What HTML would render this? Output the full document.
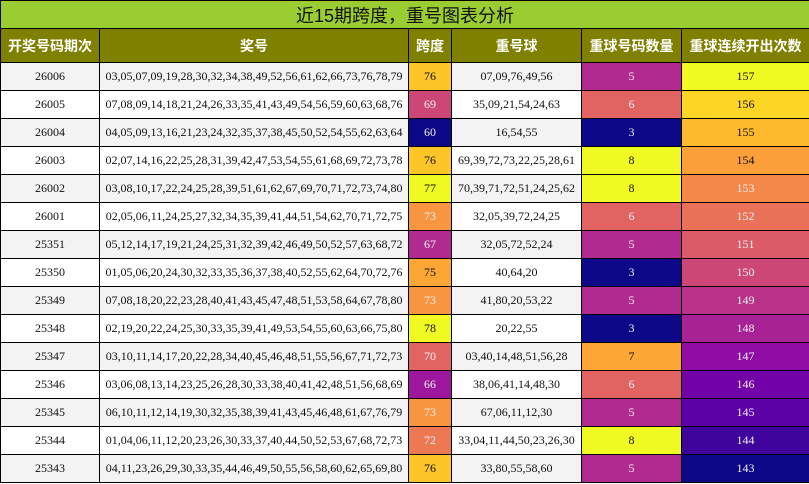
<!DOCTYPE html><html><head><meta charset="utf-8"><style>
body{margin:0;background:#fff;}
table{border-collapse:collapse;table-layout:fixed;width:809px;font-family:"Liberation Serif","Noto Serif CJK SC",serif;font-size:12px;}
td,th{border:1px solid #000;text-align:center;padding:0;overflow:hidden;white-space:nowrap;}
tr.t{height:28px}
.t td{background:#9acd32;font-family:"Liberation Sans","Noto Sans CJK SC",sans-serif;font-size:18px;color:#111;}
tr.h{height:34px}
th{background:#808000;color:#fff;font-family:"Liberation Sans","Noto Sans CJK SC",sans-serif;font-size:14px;font-weight:bold;}
tr.r{height:28px}
tr.r td{color:#111;}
tr.r:nth-child(odd) td{background:#f3f3f3;}
.w{color:#eee!important}
</style></head><body><table>
<colgroup><col style="width:99px"><col style="width:309px"><col style="width:43px"><col style="width:130px"><col style="width:100px"><col style="width:128px"></colgroup>
<tr class="t"><td colspan="6">近15期跨度，重号图表分析</td></tr>
<tr class="h"><th>开奖号码期次</th><th>奖号</th><th>跨度</th><th>重号球</th><th>重球号码数量</th><th>重球连续开出次数</th></tr>
<tr class="r"><td>26006</td><td>03,05,07,09,19,28,30,32,34,38,49,52,56,61,62,66,73,76,78,79</td><td style="background:#fdc527!important">76</td><td>07,09,76,49,56</td><td class="w" style="background:#b12a90!important">5</td><td style="background:#f0f921!important">157</td></tr>
<tr class="r"><td>26005</td><td>07,08,09,14,18,21,24,26,33,35,41,43,49,54,56,59,60,63,68,76</td><td class="w" style="background:#cc4778!important">69</td><td>35,09,21,54,24,63</td><td class="w" style="background:#e16462!important">6</td><td style="background:#fdd525!important">156</td></tr>
<tr class="r"><td>26004</td><td>04,05,09,13,16,21,23,24,32,35,37,38,45,50,52,54,55,62,63,64</td><td class="w" style="background:#0d0887!important">60</td><td>16,54,55</td><td class="w" style="background:#0d0887!important">3</td><td style="background:#feba2c!important">155</td></tr>
<tr class="r"><td>26003</td><td>02,07,14,16,22,25,28,31,39,42,47,53,54,55,61,68,69,72,73,78</td><td style="background:#fdc527!important">76</td><td>69,39,72,73,22,25,28,61</td><td style="background:#f0f921!important">8</td><td style="background:#fb9f3a!important">154</td></tr>
<tr class="r"><td>26002</td><td>03,08,10,17,22,24,25,28,39,51,61,62,67,69,70,71,72,73,74,80</td><td style="background:#f0f921!important">77</td><td>70,39,71,72,51,24,25,62</td><td style="background:#f0f921!important">8</td><td class="w" style="background:#f48849!important">153</td></tr>
<tr class="r"><td>26001</td><td>02,05,06,11,24,25,27,32,34,35,39,41,44,51,54,62,70,71,72,75</td><td class="w" style="background:#f89540!important">73</td><td>32,05,39,72,24,25</td><td class="w" style="background:#e16462!important">6</td><td class="w" style="background:#e97158!important">152</td></tr>
<tr class="r"><td>25351</td><td>05,12,14,17,19,21,24,25,31,32,39,42,46,49,50,52,57,63,68,72</td><td class="w" style="background:#b12a90!important">67</td><td>32,05,72,52,24</td><td class="w" style="background:#b12a90!important">5</td><td class="w" style="background:#db5c68!important">151</td></tr>
<tr class="r"><td>25350</td><td>01,05,06,20,24,30,32,33,35,36,37,38,40,52,55,62,64,70,72,76</td><td style="background:#fca636!important">75</td><td>40,64,20</td><td class="w" style="background:#0d0887!important">3</td><td class="w" style="background:#cc4778!important">150</td></tr>
<tr class="r"><td>25349</td><td>07,08,18,20,22,23,28,40,41,43,45,47,48,51,53,58,64,67,78,80</td><td class="w" style="background:#f89540!important">73</td><td>41,80,20,53,22</td><td class="w" style="background:#b12a90!important">5</td><td class="w" style="background:#b83289!important">149</td></tr>
<tr class="r"><td>25348</td><td>02,19,20,22,24,25,30,33,35,39,41,49,53,54,55,60,63,66,75,80</td><td style="background:#f0f921!important">78</td><td>20,22,55</td><td class="w" style="background:#0d0887!important">3</td><td class="w" style="background:#a82296!important">148</td></tr>
<tr class="r"><td>25347</td><td>03,10,11,14,17,20,22,28,34,40,45,46,48,51,55,56,67,71,72,73</td><td class="w" style="background:#e16462!important">70</td><td>03,40,14,48,51,56,28</td><td style="background:#fca636!important">7</td><td class="w" style="background:#8f0da4!important">147</td></tr>
<tr class="r"><td>25346</td><td>03,06,08,13,14,23,25,26,28,30,33,38,40,41,42,48,51,56,68,69</td><td class="w" style="background:#9c179e!important">66</td><td>38,06,41,14,48,30</td><td class="w" style="background:#e16462!important">6</td><td class="w" style="background:#7201a8!important">146</td></tr>
<tr class="r"><td>25345</td><td>06,10,11,12,14,19,30,32,35,38,39,41,43,45,46,48,61,67,76,79</td><td class="w" style="background:#f89540!important">73</td><td>67,06,11,12,30</td><td class="w" style="background:#b12a90!important">5</td><td class="w" style="background:#5c01a6!important">145</td></tr>
<tr class="r"><td>25344</td><td>01,04,06,11,12,20,23,26,30,33,37,40,44,50,52,53,67,68,72,73</td><td class="w" style="background:#ed7953!important">72</td><td>33,04,11,44,50,23,26,30</td><td style="background:#f0f921!important">8</td><td class="w" style="background:#3e049c!important">144</td></tr>
<tr class="r"><td>25343</td><td>04,11,23,26,29,30,33,35,44,46,49,50,55,56,58,60,62,65,69,80</td><td style="background:#fdc527!important">76</td><td>33,80,55,58,60</td><td class="w" style="background:#b12a90!important">5</td><td class="w" style="background:#0d0887!important">143</td></tr>
</table></body></html>
